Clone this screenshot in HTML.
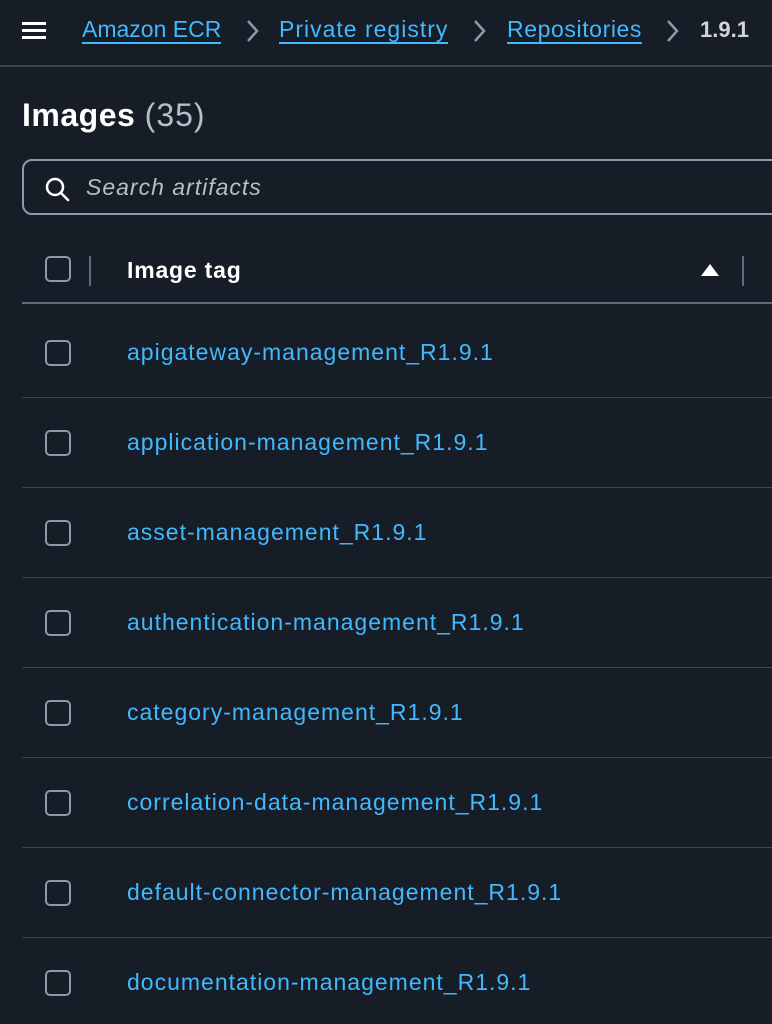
<!DOCTYPE html>
<html><head><style>
body{margin:0;width:772px;height:1024px;overflow:hidden;background:#161d26;font-family:"Liberation Sans",sans-serif;position:relative}
.a{position:absolute;white-space:nowrap}
.top{left:0;top:0;width:772px;height:65px;border-bottom:2px solid #3d4450;background:#161d26}
.bc{top:16px;font-size:23px;color:#42b8fd;border-bottom:2px solid #42b8fd;line-height:26px}
.cb{width:26px;height:26px;border:2px solid #8d99a8;border-radius:5px;box-sizing:border-box}
.row{left:22px;width:750px;height:1px;background:#3d4450}
.lk{left:127px;font-size:23px;letter-spacing:1px;color:#42b8fd}
</style></head><body>
<div class="a top"></div>
<div class="a" style="left:22px;top:22px;width:24px;height:3px;background:#fff;box-shadow:0 7px 0 #fff,0 14px 0 #fff"></div>
<div class="a bc" style="left:82px">Amazon ECR</div>
<svg class="a" style="left:245px;top:19px" width="14" height="24"><path d="M3 2l9 10-9 10" fill="none" stroke="#8d99a8" stroke-width="2.5"/></svg>
<div class="a bc" style="left:279px;letter-spacing:1px">Private registry</div>
<svg class="a" style="left:472px;top:19px" width="14" height="24"><path d="M3 2l9 10-9 10" fill="none" stroke="#8d99a8" stroke-width="2.5"/></svg>
<div class="a bc" style="left:507px;letter-spacing:0.6px">Repositories</div>
<svg class="a" style="left:665px;top:19px" width="14" height="24"><path d="M3 2l9 10-9 10" fill="none" stroke="#8d99a8" stroke-width="2.5"/></svg>
<div class="a" style="left:700px;top:17px;font-size:22px;color:#d1d5db;font-weight:bold">1.9.1</div>
<div class="a" style="left:22px;top:97px;font-size:32px;font-weight:bold;color:#fff;letter-spacing:0.5px">Images <span style="font-weight:normal;color:#b6bec9;letter-spacing:1px">(35)</span></div>
<div class="a" style="left:22px;top:159px;width:780px;height:56px;border:2px solid #8d99a8;border-radius:10px;box-sizing:border-box"></div>
<svg class="a" style="left:44px;top:176px" width="28" height="28" viewBox="0 0 28 28"><circle cx="11" cy="11" r="8" fill="none" stroke="#fff" stroke-width="2.5"/><path d="M17 17l7 7" stroke="#fff" stroke-width="2.5" stroke-linecap="round"/></svg>
<div class="a" style="left:86px;top:174px;font-size:23px;font-style:italic;color:#b6bec9;letter-spacing:1px">Search artifacts</div>
<div class="a cb" style="left:45px;top:256px"></div>
<div class="a" style="left:89px;top:256px;width:2px;height:30px;background:#5f6b7a"></div>
<div class="a" style="left:127px;top:257px;font-size:23px;font-weight:bold;color:#fff;letter-spacing:0.8px">Image tag</div>
<svg class="a" style="left:700px;top:263px" width="20" height="14"><path d="M1 13L10 1L19 13Z" fill="#fff"/></svg>
<div class="a" style="left:742px;top:256px;width:2px;height:30px;background:#5f6b7a"></div>
<div class="a row" style="top:302px;height:2px;background:#5f6b7a"></div>
<div id="rows"></div>
<script>
var n=["apigateway-management_R1.9.1","application-management_R1.9.1","asset-management_R1.9.1","authentication-management_R1.9.1","category-management_R1.9.1","correlation-data-management_R1.9.1","default-connector-management_R1.9.1","documentation-management_R1.9.1"];
var h="";n.forEach(function(t,i){var c=353+i*90;h+='<div class="a cb" style="left:45px;top:'+(c-13)+'px"></div><div class="a lk" style="top:'+(c-14)+'px">'+t+'</div>';if(i<7)h+='<div class="a row" style="top:'+(c+44)+'px"></div>';});
document.getElementById("rows").innerHTML=h;
</script>
</body></html>
